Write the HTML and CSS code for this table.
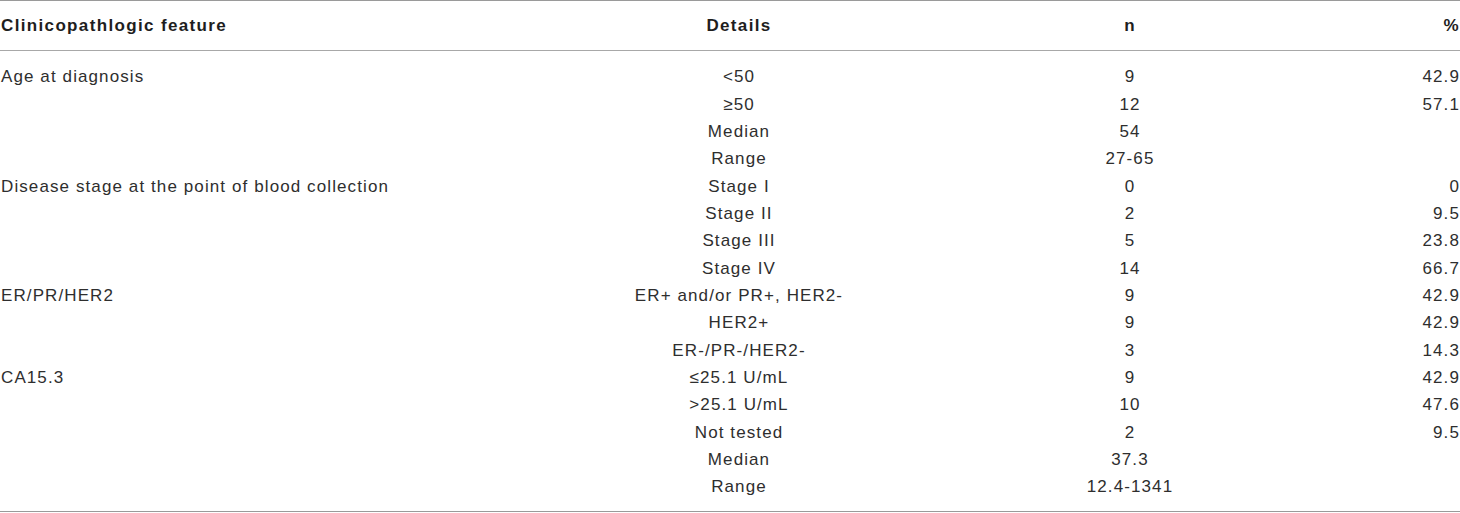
FILE: index.html
```html
<!DOCTYPE html>
<html lang="en">
<head>
<meta charset="utf-8">
<title>Clinicopathologic features</title>
<link rel="stylesheet" href="styles.css">
</head>
<body>
<div class="table">
  <div class="row head">
    <div class="c1">Clinicopathlogic feature</div>
    <div class="c2">Details</div>
    <div class="c3">n</div>
    <div class="c4">%</div>
  </div>
  <div class="body">
    <div class="row"><div class="c1">Age at diagnosis</div><div class="c2">&lt;50</div><div class="c3">9</div><div class="c4">42.9</div></div>
    <div class="row"><div class="c1"></div><div class="c2">≥50</div><div class="c3">12</div><div class="c4">57.1</div></div>
    <div class="row"><div class="c1"></div><div class="c2">Median</div><div class="c3">54</div><div class="c4"></div></div>
    <div class="row"><div class="c1"></div><div class="c2">Range</div><div class="c3">27-65</div><div class="c4"></div></div>
    <div class="row"><div class="c1">Disease stage at the point of blood collection</div><div class="c2">Stage I</div><div class="c3">0</div><div class="c4">0</div></div>
    <div class="row"><div class="c1"></div><div class="c2">Stage II</div><div class="c3">2</div><div class="c4">9.5</div></div>
    <div class="row"><div class="c1"></div><div class="c2">Stage III</div><div class="c3">5</div><div class="c4">23.8</div></div>
    <div class="row"><div class="c1"></div><div class="c2">Stage IV</div><div class="c3">14</div><div class="c4">66.7</div></div>
    <div class="row"><div class="c1">ER/PR/HER2</div><div class="c2">ER+ and/or PR+, HER2-</div><div class="c3">9</div><div class="c4">42.9</div></div>
    <div class="row"><div class="c1"></div><div class="c2">HER2+</div><div class="c3">9</div><div class="c4">42.9</div></div>
    <div class="row"><div class="c1"></div><div class="c2">ER-/PR-/HER2-</div><div class="c3">3</div><div class="c4">14.3</div></div>
    <div class="row"><div class="c1">CA15.3</div><div class="c2">≤25.1 U/mL</div><div class="c3">9</div><div class="c4">42.9</div></div>
    <div class="row"><div class="c1"></div><div class="c2">&gt;25.1 U/mL</div><div class="c3">10</div><div class="c4">47.6</div></div>
    <div class="row"><div class="c1"></div><div class="c2">Not tested</div><div class="c3">2</div><div class="c4">9.5</div></div>
    <div class="row"><div class="c1"></div><div class="c2">Median</div><div class="c3">37.3</div><div class="c4"></div></div>
    <div class="row"><div class="c1"></div><div class="c2">Range</div><div class="c3">12.4-1341</div><div class="c4"></div></div>
  </div>
</div>
</body>
</html>
```

FILE: styles.css
```css
html, body {
  margin: 0;
  padding: 0;
  background: #ffffff;
}

body {
  font-family: "Liberation Sans", Arial, sans-serif;
  font-size: 17px;
  letter-spacing: 1.1px;
  color: #2e2e2e;
  width: 1460px;
}

.table {
  border-top: 1px solid #9a9a9a;
  border-bottom: 1px solid #9a9a9a;
}

.row {
  display: grid;
  grid-template-columns: 530px 418px 364px 148px;
  line-height: 27.33px;
  white-space: nowrap;
}

.head {
  font-weight: bold;
  letter-spacing: 1.35px;
  color: #1e1e1e;
  line-height: 20px;
  padding: 15px 0 14px;
  border-bottom: 1px solid #a8a8a8;
}

.body {
  padding: 12.4px 0 10.3px;
}

.c1 {
  text-align: left;
  padding-left: 1px;
}

.c2,
.c3 {
  text-align: center;
}

.c4 {
  text-align: right;
}
```
